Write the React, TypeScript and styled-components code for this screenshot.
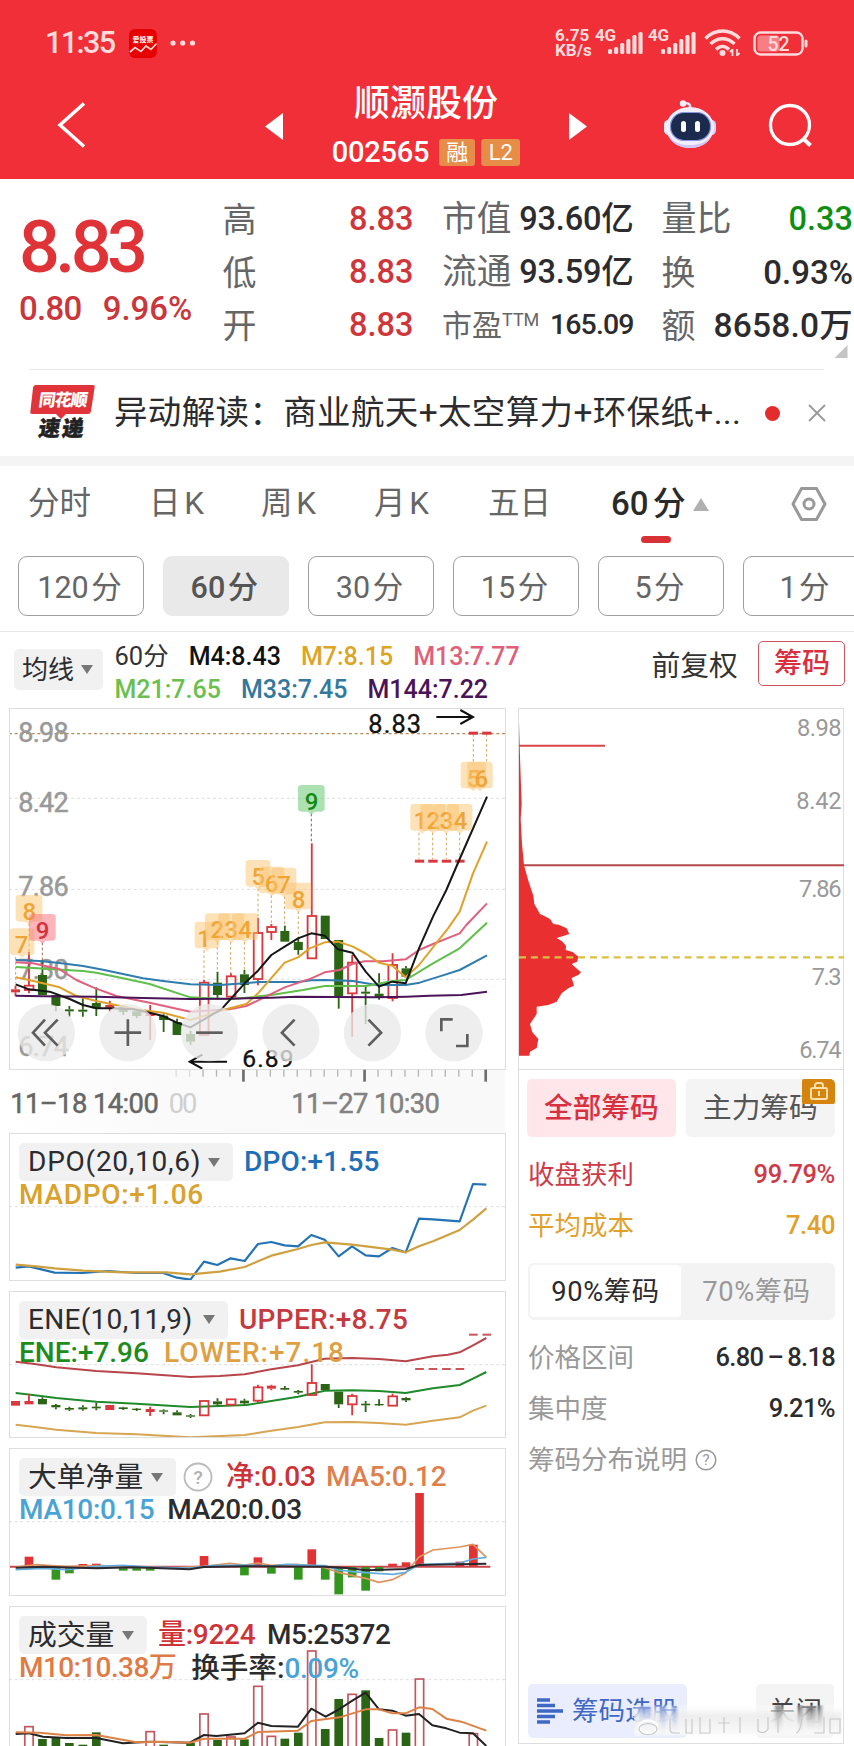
import React from "react";
import styled, { createGlobalStyle } from "styled-components";

const FONT = `Roboto, "Noto Sans CJK SC", sans-serif`;

const Global = createGlobalStyle`
  * { box-sizing: border-box; }
  html, body { margin: 0; padding: 0; background: #fff; }
  body { font-family: ${FONT}; color: #2c2c2e; width: 854px; height: 1746px; overflow: hidden; }
  svg { display: block; flex: none; }
`;

const Page = styled.div`
  width: 854px;
  height: 1746px;
  overflow: hidden;
  display: flex;
  flex-direction: column;
  background: #fff;
`;

const Txt = styled.span<{ $s: number; $c?: string; $w?: number; $ls?: number; $ml?: number; $width?: number }>`
  font-size: ${(p) => p.$s}px;
  line-height: 1;
  white-space: nowrap;
  color: ${(p) => p.$c ?? "#2c2c2e"};
  font-weight: ${(p) => p.$w ?? "inherit"};
  letter-spacing: ${(p) => p.$ls ?? 0}px;
  margin-left: ${(p) => p.$ml ?? 0}px;
  width: ${(p) => (p.$width ? p.$width + "px" : "auto")};
  flex: none;
`;

/* ---------- header ---------- */
const Header = styled.header`
  height: 179px;
  background: #f12f38;
  display: flex;
  flex-direction: column;
  flex: none;
`;
const StatusBar = styled.div`
  height: 86px;
  display: flex;
  align-items: center;
  padding-left: 45px;
`;
const Speed = styled.div`
  display: flex;
  flex-direction: column;
  font-size: 17px;
  line-height: 15px;
  font-weight: 700;
  color: #ffdcdc;
  width: 40px;
  margin-left: 359px;
  margin-top: -1px;
`;
const Signal = styled.div`
  display: flex;
  width: 53px;
  height: 30px;
  font-size: 17px;
  line-height: 15px;
  font-weight: 700;
  color: #ffdcdc;
  letter-spacing: -0.3px;
`;
const Nav = styled.div`
  height: 93px;
  display: flex;
  align-items: center;
  padding-left: 56px;
`;
const TitleBlock = styled.div`
  width: 252px;
  margin: 0 17px;
  height: 93px;
  display: flex;
  flex-direction: column;
  align-items: center;
`;
const CodeRow = styled.div`
  display: flex;
  align-items: center;
  height: 30px;
  margin-top: 15px;
`;
const Badge = styled.span<{ $w: number; $ml?: number }>`
  width: ${(p) => p.$w}px;
  height: 27px;
  border-radius: 3px;
  background: #e68d47;
  color: #fff;
  font-size: 22px;
  line-height: 27px;
  text-align: center;
  margin-left: ${(p) => p.$ml ?? 6}px;
`;

/* ---------- quote ---------- */
const Quote = styled.section`
  height: 190px;
  display: flex;
  flex: none;
`;
const PriceCol = styled.div`
  width: 223px;
  padding: 33px 0 0 19px;
`;
const ChangeRow = styled.div`
  display: flex;
  gap: 21px;
  margin-top: 8px;
`;
const QuoteCol = styled.div<{ $w: number; $ml: number }>`
  width: ${(p) => p.$w}px;
  margin-left: ${(p) => p.$ml}px;
  padding-top: 14px;
  flex: none;
`;
const QuoteRow = styled.div`
  height: 53px;
  display: flex;
  align-items: center;
  justify-content: space-between;
`;
const Corner = styled.div`
  width: 13px;
  height: 13px;
  margin: -7px 0 0 173px;
  background: #c4c4c4;
  clip-path: polygon(100% 0, 100% 100%, 0 100%);
`;

/* ---------- news ---------- */
const News = styled.section`
  height: 87px;
  margin: 0 30px;
  border-top: 1px solid #e6e6e6;
  display: flex;
  align-items: center;
  flex: none;
`;
const Dot = styled.i`
  width: 15px;
  height: 15px;
  flex: none;
  border-radius: 50%;
  background: #e52c2c;
  margin-left: 20px;
`;
const Band = styled.div`
  height: 10px;
  background: #f4f4f4;
  flex: none;
`;

/* ---------- tabs ---------- */
const Tabs = styled.nav`
  height: 90px;
  display: flex;
  padding: 13px 0 0 28px;
  flex: none;
`;
const Tab = styled.div<{ $w: number; $on?: boolean }>`
  width: ${(p) => p.$w}px;
  height: 70px;
  display: flex;
  flex-direction: column;
  color: ${(p) => (p.$on ? "#2a2a2a" : "#666")};
  font-weight: ${(p) => (p.$on ? 500 : 400)};
  font-size: ${(p) => (p.$on ? 33 : 31.5)}px;
  line-height: 50px;
  white-space: pre;
  word-spacing: -4px;
`;
const TabLabel = styled.div`
  display: flex;
  align-items: center;
  gap: 6px;
  height: 50px;
`;
const Underline = styled.i`
  width: 30px;
  height: 7px;
  flex: none;
  margin: 7px 0 0 30px;
  border-radius: 4px;
  background: #d93236;
`;
const Chips = styled.div`
  display: flex;
  gap: 19px;
  padding-left: 17.5px;
  height: 76px;
  overflow: hidden;
  border-bottom: 1px solid #e6e6e6;
  flex: none;
`;
const Chip = styled.button<{ $on?: boolean }>`
  width: 126px;
  height: 60px;
  flex: none;
  padding: 0 2px 2px 0;
  border-radius: 9px;
  border: ${(p) => (p.$on ? "none" : "1px solid #a0a0a0")};
  background: ${(p) => (p.$on ? "#e9e9e9" : "#fff")};
  font: ${(p) => (p.$on ? 500 : 400)} 30.5px ${FONT};
  color: ${(p) => (p.$on ? "#555" : "#666")};
  word-spacing: -5px;
`;

/* ---------- average lines bar ---------- */
const MaBar = styled.div`
  height: 76px;
  display: flex;
  padding-left: 13.5px;
  flex: none;
`;
const Pill = styled.div<{ $w: number; $h: number; $pl: number; $mt?: number }>`
  width: ${(p) => p.$w}px;
  height: ${(p) => p.$h}px;
  padding-left: ${(p) => p.$pl}px;
  margin-top: ${(p) => p.$mt ?? 0}px;
  border-radius: 5px;
  background: #f1f1f1;
  display: flex;
  align-items: center;
  flex: none;
`;
const Caret = styled.i<{ $up?: boolean; $ml?: number; $c?: string }>`
  width: 0;
  height: 0;
  margin-left: ${(p) => p.$ml ?? 0}px;
  border-left: ${(p) => (p.$up ? 8 : 6.5)}px solid transparent;
  border-right: ${(p) => (p.$up ? 8 : 6.5)}px solid transparent;
  border-${(p) => (p.$up ? "bottom" : "top")}: ${(p) => (p.$up ? 13 : 9)}px solid ${(p) => p.$c ?? "#777"};
`;
const MaList = styled.div`
  width: 525px;
  margin-left: 12px;
  padding-top: 8px;
`;
const MaRow = styled.div`
  display: flex;
  gap: 20px;
  height: 33px;
  align-items: center;
  font-weight: 500;
`;
const ChipToggle = styled.button`
  width: 87px;
  height: 45px;
  margin: 9px 0 0 20.5px;
  padding: 0;
  border: 1.5px solid #d05560;
  border-radius: 5px;
  background: #fff;
  color: #d92f40;
  font: 500 28px ${FONT};
  line-height: 40px;
`;

/* ---------- charts ---------- */
const Body = styled.main`
  display: flex;
  padding-left: 9px;
  gap: 12.5px;
  height: 1038px;
`;
const Left = styled.div`
  width: 496px;
  flex: none;
`;
const Frame = styled.div<{ $h: number; $mb?: number }>`
  width: 497px;
  height: ${(p) => p.$h}px;
  margin-bottom: ${(p) => p.$mb ?? 0}px;
  border: 1px solid #dedede;
  display: grid;
  overflow: hidden;
  > * { grid-area: 1 / 1; }
`;
const Canvas = styled.svg`
  width: 496px;
  margin: -1px 0 0 -1px;
  overflow: visible;
`;
const AxisStrip = styled.div`
  display: grid;
  height: 63.5px;
  background: linear-gradient(90deg, #fff 0, #fafafa 30%, #f9f9f9 100%);
`;
const Legend = styled.div`
  padding: 9px 0 0 9px;
  z-index: 0;
  font-weight: 500;
`;
const LegendRow = styled.div<{ $h: number; $gap?: number }>`
  height: ${(p) => p.$h}px;
  display: flex;
  align-items: center;
  gap: ${(p) => p.$gap ?? 11}px;
`;

/* ---------- chip distribution panel ---------- */
const Right = styled.aside`
  width: 326.5px;
  height: 1036px;
  border: 1px solid #dedede;
  display: flex;
  flex-direction: column;
`;
const DistBox = styled.div`
  height: 361px;
  border-bottom: 1px solid #dedede;
  flex: none;
`;
const PickRow = styled.div`
  display: flex;
  gap: 10px;
  padding: 9px 0 0 8.5px;
`;
const Pick = styled.div<{ $on?: boolean }>`
  position: relative;
  width: 149px;
  height: 58px;
  border-radius: 5px;
  background: ${(p) => (p.$on ? "#ffe6ea" : "#f4f4f4")};
  color: ${(p) => (p.$on ? "#d9303f" : "#555")};
  font-weight: ${(p) => (p.$on ? 500 : 400)};
  font-size: 28.7px;
  line-height: 58px;
  padding-left: 17px;
`;
const LockTag = styled.span`
  position: absolute;
  right: 0;
  top: 0;
  width: 33px;
  height: 25px;
  border-radius: 2px 5px 2px 2px;
  background: #d5850f;
  display: flex;
  justify-content: center;
`;
const Stat = styled.div<{ $start?: boolean }>`
  height: 51px;
  padding: 0 8px 0 9.5px;
  display: flex;
  align-items: center;
  justify-content: ${(p) => (p.$start ? "flex-start" : "space-between")};
  gap: 8px;
  word-spacing: -1.5px;
`;
const Stats = styled.div<{ $mt: number }>`
  margin-top: ${(p) => p.$mt}px;
`;
const Segments = styled.div`
  display: flex;
  width: 307px;
  height: 57px;
  margin: 11px 0 0 9px;
  padding: 2.5px;
  border-radius: 6px;
  background: #f3f3f3;
`;
const Segment = styled.div<{ $on?: boolean }>`
  width: 151px;
  border-radius: 4px;
  background: ${(p) => (p.$on ? "#fff" : "transparent")};
  color: ${(p) => (p.$on ? "#2a2a2a" : "#999")};
  text-align: center;
  font-size: 27.3px;
  letter-spacing: 0.6px;
  line-height: 54px;
`;
const BottomRow = styled.div`
  position: relative;
  display: flex;
  justify-content: space-between;
  margin: auto 9px 5px 9.5px;
`;
const BottomBtn = styled.div<{ $w: number; $blue?: boolean }>`
  width: ${(p) => p.$w}px;
  height: 54px;
  border-radius: 5px;
  background: ${(p) => (p.$blue ? "#e9edfd" : "#f4f4f4")};
  color: ${(p) => (p.$blue ? "#3f68c4" : "#444")};
  font-size: 26.5px;
  line-height: 1;
  display: flex;
  align-items: center;
  padding-left: ${(p) => (p.$blue ? 9 : 13)}px;
  gap: 9px;
`;
const Smear = styled.div`
  position: absolute;
  left: 106px;
  top: 21px;
  width: 208px;
  height: 33px;
`;

const R = "#d9383c";
const G = "#2c6416";
const X = (i: number) => 47.5 + i * 40.4;

/* kind, index, high, body top, body bottom, low */
type Candle = ["r" | "g" | "rf", number, number, number, number, number];
const candles: Candle[] = [
  ["rf", 0, 257, 268, 277, 289],
  ["r", 1, 155, 257, 270, 280],
  ["g", 2, 180, 225, 285, 285],
  ["g", 3, 285, 285, 318, 334],
  ["g", 4, 318, 328, 334, 350],
  ["g", 5, 295, 329, 335, 350],
  ["g", 6, 262, 309, 325, 348],
  ["rf", 7, 302, 315, 323, 335],
  ["g", 8, 315, 320, 336, 345],
  ["g", 9, 328, 334, 348, 355],
  ["rf", 10, 315, 338, 348, 420],
  ["g", 11, 343, 347, 360, 396],
  ["g", 12, 356, 366, 405, 405],
  ["g", 13, 392, 402, 425, 434],
  ["r", 14, 240, 248, 405, 405],
  ["g", 15, 215, 248, 285, 296],
  ["r", 16, 220, 229, 290, 292],
  ["g", 17, 210, 223, 255, 279],
  ["r", 18, 53, 99, 237, 256],
  ["r", 19, 72, 81, 96, 120],
  ["g", 20, 77, 93, 125, 125],
  ["g", 21, 113, 126, 150, 164],
  ["r", 22, -170, 48, 175, 175],
  ["g", 23, 47, 47, 117, 117],
  ["g", 24, 120, 120, 288, 326],
  ["r", 25, 165, 188, 280, 410],
  ["g", 26, 255, 275, 281, 372],
  ["g", 27, 220, 281, 292, 299],
  ["r", 28, 160, 195, 294, 304],
  ["g", 29, 198, 205, 230, 230],
];

const Candles = ({ data }: { data: Candle[] }) => (
  <>
    {data.map(([k, i, h, t, b, l]) => {
      const x = X(i);
      const c = k === "g" ? G : R;
      return (
        <g key={i} stroke={c} fill={k === "r" ? "none" : c}>
          <path d={`M${x} ${h}V${t}M${x} ${b}V${l}`} strokeWidth={5.5} />
          {k === "r" ? (
            <rect x={x - 12.5} y={t} width={26} height={Math.max(b - t, 3)} strokeWidth={5.5} />
          ) : (
            <rect x={x - 13.5} y={t} width={27} height={b - t} stroke="none" />
          )}
        </g>
      );
    })}
  </>
);

const Line = ({ d, c, w = 6 }: { d: string; c: string; w?: number }) => (
  <polyline points={d} fill="none" stroke={c} strokeWidth={w} strokeLinejoin="round" />
);

/* label, left, top, width, digit x, colour set, candle x, dash end */
const tags: [string, number, number, number, number, string, number, number][] = [
  ["7", 30, 85, 74, 66, "o", 48, 250],
  ["8", 48, -15, 80, 89, "o", 88, 155],
  ["9", 88, 42, 80, 129, "r", 128, 222],
  ["1", 585, 65, 74, 613, "o", 613, 240],
  ["2", 616, 40, 74, 653, "o", 653, 215],
  ["3", 656, 40, 78, 695, "o", 693, 220],
  ["4", 697, 40, 78, 736, "o", 734, 210],
  ["5", 738, -120, 74, 776, "o", 775, 52],
  ["6", 778, -100, 76, 816, "o", 815, 72],
  ["7", 814, -97, 76, 853, "o", 855, 77],
  ["8", 857, -52, 78, 897, "o", 896, 113],
  ["9", 895, -345, 80, 936, "g", 935, -170],
  ["1", 1232, -288, 70, 1262, "o", 1258, -122],
  ["2", 1262, -288, 76, 1301, "o", 1299, -122],
  ["3", 1302, -288, 76, 1341, "o", 1340, -122],
  ["4", 1342, -288, 76, 1383, "o", 1380, -122],
  ["5", 1383, -415, 76, 1422, "o", 1421, -500],
  ["6", 1403, -415, 76, 1445, "o", 1461, -500],
];
const tagColors: Record<string, [string, string]> = {
  o: ["rgba(252,196,112,.5)", "#efa536"],
  r: ["rgba(250,120,130,.55)", "#d8303c"],
  g: ["rgba(120,205,125,.6)", "#0f8a14"],
};

const tools = [
  <path key="a" d="M-4 -39L-40 0L-4 39M34 -39L-4 0L34 39" />,
  <path key="b" d="M-40 0H40M0 -40V40" />,
  <path key="c" d="M-40 0H40" />,
  <path key="d" d="M11 -39L-27 0L11 39" />,
  <path key="e" d="M-12 -39L26 0L-12 39" />,
  <path key="f" d="M-38 -4V-40H-4M40 4V40H6" />,
];

const MainChart = () => (
  <Canvas viewBox="28 -576 1488 1083" height={361} fontFamily={FONT}>
    <g strokeWidth={3} fill="none" strokeDasharray="9 8">
      <path d="M28 -499H1516" stroke="#b98a5c" strokeWidth={3.5} />
      <path d="M28 -305H1516M28 -32H1516M28 238H1516" stroke="#dedede" />
    </g>
    <g fontSize={81} fill="#999" stroke="#999" strokeWidth={1.5}>
      <text x={56} y={-475} textLength={151}>8.98</text>
      <text x={56} y={-264} textLength={151}>8.42</text>
      <text x={56} y={-13} textLength={151}>7.86</text>
      <text x={56} y={237} textLength={151}>7.30</text>
      <text x={56} y={468} textLength={151}>6.74</text>
    </g>
    {tags.map(([, , top, , , c, cx, end], n) => (
      <path key={n} d={`M${cx} ${top < end ? top + 86 : top}V${end}`} stroke={c === "o" ? "#cfa860" : c === "g" ? "#4f7a4f" : "#a06a50"} strokeWidth={3} strokeDasharray="8 7" />
    ))}
    <Candles data={candles} />
    {[30, 31, 32, 33, 34, 35].map((i) => (
      <rect key={i} x={X(i) - 14} y={i < 34 ? -121 : -505} width={28} height={9} fill="#d9383c" />
    ))}
    <Line c="#2f7cae" d="48,180 120,183 180,189 250,198 310,209 370,222 430,235 490,243 572,253 660,255 735,250 775,246 895,246 935,241 975,240 1060,243 1130,255 1218,255 1260,248 1320,229 1380,210 1462,166" />
    <Line c="#5fbf4a" d="48,201 88,203 250,213 290,218 370,235 450,252 572,292 690,298 740,293 815,285 910,270 975,258 1100,258 1180,243 1218,240 1300,190 1380,145 1462,68" />
    <Line c="#e0607e" d="48,187 100,190 180,208 230,240 280,262 350,288 450,308 572,335 690,328 740,318 855,262 935,235 975,217 1020,210 1058,192 1095,184 1150,184 1218,178 1258,150 1300,132 1380,100 1400,75 1462,10" />
    <Line c="#e0a12a" d="48,232 88,240 130,250 180,262 230,288 290,303 410,328 490,338 572,360 690,325 740,312 775,280 855,188 895,172 930,145 975,127 1015,125 1060,140 1100,162 1138,188 1178,197 1218,232 1258,195 1345,85 1380,35 1420,-80 1462,-175" />
    <Line c="#4b1458" d="48,287 130,289 290,290 430,294 570,297 690,296 815,293 890,290 1130,292 1220,290 1290,287 1385,285 1462,275" />
    <Line c="#161616" d="48,253 88,268 150,275 210,297 250,315 290,325 335,325 400,328 450,338 490,348 532,368 572,382 665,328 735,250 775,212 815,165 855,140 895,115 935,100 975,107 1015,148 1058,158 1098,215 1138,260 1178,245 1218,250 1258,145 1300,50 1340,-30 1380,-123 1462,-310" />
    {tags.map(([t, l, top, w, dx, c], n) => (
      <g key={n}>
        <path
          d={`M${l + 10} ${top}H${l + w - 10}q10 0 10 10V${top + 70}q0 10 -10 10H${l + w / 2 + 10}l-10 9l-10 -9H${l + 10}q-10 0 -10 -10V${top + 10}q0 -10 10 -10Z`}
          fill={tagColors[c][0]}
        />
        <text x={dx} y={top + 75} textAnchor="middle" fontSize={72} fontWeight={500} fill={tagColors[c][1]}>{t}</text>
      </g>
    ))}
    <text x={1106} y={-502} fontSize={76} fill="#111" stroke="#111" strokeWidth={1} textLength={158}>8.83</text>
    <text x={728} y={502} fontSize={74} fill="#111" stroke="#111" strokeWidth={1} textLength={154}>6.89</text>
    <path d="M1310 -549H1418M1382 -570L1420 -549L1382 -528M682 485H572M608 464L570 485L608 506" fill="none" stroke="#111" strokeWidth={6} />
    {tools.map((p, i) => (
      <g key={i} transform={`translate(${140 + i * 244.6} 398)`} fill="none" stroke="#5e5e5e" strokeWidth={8}>
        <circle r={86} fill="rgba(233,233,233,.78)" stroke="none" />
        {p}
      </g>
    ))}
  </Canvas>
);

const Axis = () => (
  <AxisStrip>
    <Canvas viewBox="28 508 1488 190" height={63.3} fontFamily={FONT}>
      {Array.from({ length: 24 }, (_, n) => n + 12).map((i) => {
        const major = i === 17 || i === 26 || i === 35;
        return <path key={i} d={`M${X(i)} 510V${major ? 546 : 531}`} stroke={major ? "#6e6e6e" : i < 14 ? "#ddd" : "#b5b5b5"} strokeWidth={major ? 8 : 4} />;
      })}
      <g fontSize={82} strokeWidth={1.5}>
        <text x={34} y={640} textLength={446} fill="#666" stroke="#666">11–18 14:00</text>
        <text x={510} y={640} textLength={86} fill="#cfcfcf">00</text>
        <text x={878} y={640} textLength={446} fill="#828282" stroke="#828282">11–27 10:30</text>
      </g>
    </Canvas>
  </AxisStrip>
);

const eneCandles: Candle[] = [
  ["rf", 0, 843, 843, 857, 857],
  ["rf", 1, 822, 843, 853, 853],
  ["g", 2, 832, 837, 853, 853],
  ["g", 3, 852, 855, 862, 868],
  ["g", 4, 860, 864, 869, 873],
  ["g", 5, 856, 862, 868, 872],
  ["g", 6, 848, 860, 865, 871],
  ["rf", 7, 855, 855, 870, 870],
  ["g", 8, 860, 862, 867, 870],
  ["g", 9, 864, 866, 870, 873],
  ["rf", 10, 860, 867, 876, 888],
  ["g", 11, 868, 871, 875, 883],
  ["g", 12, 871, 877, 886, 886],
  ["g", 13, 882, 886, 890, 894],
  ["r", 14, 843, 843, 886, 886],
  ["g", 15, 835, 844, 853, 858],
  ["r", 16, 838, 838, 854, 854],
  ["g", 17, 836, 842, 850, 855],
  ["r", 18, 794, 802, 842, 847],
  ["rf", 19, 794, 797, 806, 811],
  ["g", 20, 798, 804, 809, 811],
  ["g", 21, 810, 813, 818, 823],
  ["r", 22, 733, 789, 825, 825],
  ["g", 23, 792, 792, 810, 810],
  ["g", 24, 815, 815, 853, 864],
  ["r", 25, 821, 828, 853, 886],
  ["g", 26, 843, 851, 856, 876],
  ["g", 27, 838, 852, 856, 858],
  ["r", 28, 821, 829, 857, 857],
  ["g", 29, 832, 834, 841, 846],
];

const SubFrame = ({ top, mid, children, legend }: { top: number; mid: number; children: React.ReactNode; legend: React.ReactNode }) => (
  <Frame $h={147.5} $mb={10.2}>
    <Canvas viewBox={`28 ${top} 1488 441`} height={147}>
      <path d={`M28 ${mid}H1516`} stroke="#dedede" strokeWidth={3} strokeDasharray="9 8" />
      {children}
    </Canvas>
    <Legend>{legend}</Legend>
  </Frame>
);

const netBars: [number, number, number][] = [
  [1, 381, 410], [3, 412, 450], [4, 412, 431], [5, 403, 410], [6, 402, 410], [8, 412, 423], [9, 412, 423], [10, 412, 423],
  [14, 379, 410], [17, 412, 437], [18, 383, 410], [19, 412, 432], [21, 412, 450], [22, 359, 410], [23, 412, 450], [24, 412, 494],
  [25, 412, 443], [26, 412, 483], [27, 412, 425], [28, 402, 410], [29, 398, 410], [30, 190, 410], [33, 396, 410], [34, 345, 410],
];
const volRed: [number, number][] = [[1, 890], [10, 905], [14, 852], [16, 921], [18, 769], [19, 919], [22, 663], [25, 793], [28, 900], [30, 747], [34, 911]];
const volGreen: [number, number][] = [
  [2, 927], [3, 922], [4, 939], [5, 944], [6, 907], [11, 944], [13, 938], [15, 930], [17, 928], [20, 926], [21, 908], [23, 897], [24, 807], [26, 781], [27, 924], [29, 908],
];

const Wifi = () => (
  <svg width="37" height="28" viewBox="0 0 37 28" fill="none" stroke="#ffdcdc" strokeWidth="3.4" style={{ marginLeft: 3 }}>
    <path d="M1.500 9.500C11 -.5 26 -.5 35.500 9.500M6.500 15C13.500 8 23.500 8 30.500 15M12 20.500C16 16.500 21 16.500 25 20.500" />
    <circle cx="18.500" cy="24" r="3" fill="#ffdcdc" stroke="none" />
    <path d="M28.500 20V27M28.500 20.500L26 23M33 27V20M33 26.500L35.500 24" strokeWidth="1.800" />
  </svg>
);

const Bars = () => (
  <svg width="36" height="23" viewBox="0 0 36 23" fill="#ffdcdc" style={{ marginTop: 3, marginLeft: -8 }}>
    {[5, 7, 11, 15, 19, 22].map((h, i) => <rect key={i} x={i * 6.1} y={23 - h} width={4.1} height={h} rx={1.5} />)}
  </svg>
);

const Robot = () => (
  <svg width="52" height="49" viewBox="0 0 52 49">
    <path d="M26 8C27 3 23 3 19 3" stroke="#e6e2fb" strokeWidth="2.500" fill="none" />
    <circle cx="19" cy="3.500" r="3.200" fill="#f4eefb" />
    <rect x="0" y="20" width="9" height="15" rx="4.500" fill="#f0eaff" />
    <rect x="43" y="20" width="9" height="15" rx="4.500" fill="#d6d0fa" />
    <ellipse cx="26" cy="27.500" rx="24" ry="20.500" fill="#f3eefd" />
    <path d="M49 32C46 43 37 48 26 48S6 43 3 32C8 44 18 45 26 45S45 43 49 32Z" fill="#cfc6f6" />
    <rect x="6.500" y="12.500" width="40" height="28" rx="13.500" fill="#1c2a4e" stroke="#8797e2" strokeWidth="1.200" />
    <rect x="17" y="21" width="5" height="11" rx="2.500" fill="#fff" />
    <rect x="31" y="21" width="5" height="11" rx="2.500" fill="#fff" />
  </svg>
);

const Lbl = ({ t, s = 34 }: { t: string; s?: number }) => <Txt $s={s} $c="#666">{t}</Txt>;

const chipsList = ["120 分", "60 分", "30 分", "15 分", "5 分", "1 分"];

export default function App() {
  return (
    <Page>
      <Global />
      <Header>
        <StatusBar>
          <Txt $s={30.5} $c="#ffdcdc" $ls={-1.6} $width={84} $w={500}>11:35</Txt>
          <svg width="28" height="29" viewBox="0 0 28 29">
            <rect width="28" height="29" rx="6" fill="#e60000" />
            <text x="14" y="12.500" fontSize="7" fontWeight="900" textAnchor="middle" fill="#ffe2dc" fontFamily={FONT}>爱投票</text>
            <path d="M1 23L6 18.500L12 22.500L17 17L22 20.500L27.500 14.500" fill="none" stroke="#ffd9d0" strokeWidth="1.700" />
          </svg>
          <svg width="26" height="6" viewBox="0 0 26 6" style={{ marginLeft: 13 }} fill="#ffdcdc">
            <circle cx="3" cy="3" r="2.600" /><circle cx="12.700" cy="3" r="2.600" /><circle cx="22.500" cy="3" r="2.600" />
          </svg>
          <Speed><span>6.75</span><span>KB/s</span></Speed>
          <Signal>4G<Bars /></Signal>
          <Signal>4G<Bars /></Signal>
          <Wifi />
          <svg width="55" height="25" viewBox="0 0 55 25" style={{ marginLeft: 12 }}>
            <rect x="1.500" y="1.500" width="48" height="22" rx="6" fill="none" stroke="#ffdcdc" strokeWidth="2.400" />
            <rect x="4.500" y="4.500" width="22" height="16" rx="3" fill="#f77f83" />
            <rect x="51.500" y="8.500" width="3" height="8" rx="1.500" fill="#ffdcdc" />
            <text x="25.500" y="19.800" fontSize="19.500" fontWeight="500" textAnchor="middle" fill="#ffdcdc" fontFamily={FONT}>52</text>
          </svg>
        </StatusBar>
        <Nav>
          <svg width="32" height="46" viewBox="0 0 32 46" style={{ marginTop: -16 }}><path d="M28 1.500L4 23L28 44.500" fill="none" stroke="#fff" strokeWidth="3.500" /></svg>
          <svg width="18" height="27" viewBox="0 0 18 27" style={{ marginTop: -12, marginLeft: 177 }}><path d="M18 0V27L0 13.500Z" fill="#fff" /></svg>
          <TitleBlock>
            <Txt $s={36} $c="#fff" $w={500}>顺灏股份</Txt>
            <CodeRow>
              <Txt $s={29} $c="#fff" $w={500} $ls={-0.2}>002565</Txt>
              <Badge $w={36} $ml={10}>融</Badge>
              <Badge $w={39}>L2</Badge>
            </CodeRow>
          </TitleBlock>
          <svg width="18" height="27" viewBox="0 0 18 27" style={{ marginTop: -12 }}><path d="M0 0V27L18 13.500Z" fill="#fff" /></svg>
          <svg width="77" height="1" />
          <div style={{ marginTop: -17 }}><Robot /></div>
          <svg width="46" height="46" viewBox="0 0 46 46" style={{ margin: "-14px 0 0 52px" }} fill="none" stroke="#fff" strokeWidth="3.300">
            <circle cx="22" cy="22" r="19.500" /><path d="M34.500 35L42.500 42.500" strokeWidth="4" />
          </svg>
        </Nav>
      </Header>

      <Quote>
        <PriceCol>
          <Txt $s={72} $c="#e03338" $w={500} $ls={-4.6}>8.83</Txt>
          <ChangeRow>
            <Txt $s={33} $c="#c9373c" $w={500} $ls={-0.7}>0.80</Txt>
            <Txt $s={33} $c="#c9373c" $w={500}>9.96%</Txt>
          </ChangeRow>
        </PriceCol>
        <QuoteCol $w={191} $ml={-0.5}>
          {["高", "低", "开"].map((t) => (
            <QuoteRow key={t}><Lbl t={t} /><Txt $s={32.5} $c="#d0353a" $w={500}>8.83</Txt></QuoteRow>
          ))}
        </QuoteCol>
        <QuoteCol $w={191.5} $ml={28.5}>
          <QuoteRow><Lbl t="市值" s={34.7} /><Txt $s={32.5} $w={500} $ls={-0.2}>93.60亿</Txt></QuoteRow>
          <QuoteRow><Lbl t="流通" s={34.7} /><Txt $s={32.5} $w={500} $ls={-0.2}>93.59亿</Txt></QuoteRow>
          <QuoteRow>
            <Lbl t="市盈" s={30} />
            <Txt $s={18} $c="#666" $width={48} style={{ marginTop: -11 }}>TTM</Txt>
            <Txt $s={28.500} $w={500} $ls={-0.9}>165.09</Txt>
          </QuoteRow>
        </QuoteCol>
        <QuoteCol $w={191.5} $ml={28}>
          <QuoteRow><Lbl t="量比" s={35} /><Txt $s={32.5} $c="#0e8f12" $w={500}>0.33</Txt></QuoteRow>
          <QuoteRow><Lbl t="换" /><Txt $s={33} $w={500}>0.93%</Txt></QuoteRow>
          <QuoteRow><Lbl t="额" /><Txt $s={33.500} $w={500} $ls={0.2}>8658.0万</Txt></QuoteRow>
          <Corner />
        </QuoteCol>
      </Quote>

      <News>
        <svg width="66" height="56" viewBox="0 0 66 56" fontFamily={FONT}>
          <path d="M6 0H63q2 0 1.700 2L61 26q-.5 3 -3 3H36L31 34L26 29H2q-2 0 -1.700 -2L3 3q.5 -3 3 -3Z" fill="#e0343a" />
          <g fontWeight="900" transform="skewX(-8)">
            <text x="11" y="21.500" fontSize="17" fill="#fff" textLength="49">同花顺</text>
            <text x="15" y="51.500" fontSize="21.500" fill="#222" stroke="#222" strokeWidth=".5" textLength="45">速递</text>
          </g>
        </svg>
        <Txt $s={33.500} $ml={18} $ls={0.35} $width={631}>异动解读：商业航天+太空算力+环保纸+...</Txt>
        <Dot />
        <svg width="18" height="18" viewBox="0 0 18 18" style={{ marginLeft: 28 }}><path d="M1 1L17 17M17 1L1 17" stroke="#999" strokeWidth="1.800" /></svg>
      </News>
      <Band />

      <Tabs>
        <Tab $w={121}>分时</Tab>
        <Tab $w={112}>日 K</Tab>
        <Tab $w={113}>周 K</Tab>
        <Tab $w={114}>月 K</Tab>
        <Tab $w={123}>五日</Tab>
        <Tab $w={180} $on>
          <TabLabel>60 分<Caret $up $c="#b0b0b0" $ml={1} /></TabLabel>
          <Underline />
        </Tab>
        <svg width="36" height="34" viewBox="0 0 36 34" fill="none" stroke="#999" strokeWidth="3" style={{ marginTop: 8 }}>
          <path d="M10.500 1.500H25.500L34 17L25.500 32.500H10.500L2 17Z" strokeLinejoin="round" /><circle cx="18" cy="17" r="5" />
        </svg>
      </Tabs>
      <Chips>
        {chipsList.map((c, i) => <Chip key={c} $on={i === 1}>{c}</Chip>)}
      </Chips>

      <MaBar>
        <Pill $w={89} $h={41} $pl={8.5} $mt={17}>
          <Txt $s={26}>均线</Txt><Caret $ml={7} />
        </Pill>
        <MaList>
          <MaRow>
            <Txt $s={25.5} $c="#333" $w={400}>60分</Txt>
            <Txt $s={25} $c="#111">M4:8.43</Txt>
            <Txt $s={25} $c="#dda526">M7:8.15</Txt>
            <Txt $s={25} $c="#e0607a">M13:7.77</Txt>
          </MaRow>
          <MaRow>
            <Txt $s={25} $c="#6abf4e">M21:7.65</Txt>
            <Txt $s={25} $c="#33789e">M33:7.45</Txt>
            <Txt $s={25} $c="#4b1458">M144:7.22</Txt>
          </MaRow>
        </MaList>
        <Txt $s={28.8} $c="#333" $ml={12} style={{ marginTop: 20 }}>前复权</Txt>
        <ChipToggle>筹码</ChipToggle>
      </MaBar>

      <Body>
        <Left>
          <Frame $h={361.500}><MainChart /></Frame>
          <Axis />
          <SubFrame
            top={40}
            mid={261}
            legend={
              <>
                <LegendRow $h={38}>
                  <Pill $w={214} $h={38} $pl={9}><Txt $s={28} $w={400} $ls={0.75} $width={174}>DPO(20,10,6)</Txt><Caret $ml={6} /></Pill>
                  <Txt $s={28} $c="#1f6fb8" $ls={0.2}>DPO:+1.55</Txt>
                </LegendRow>
                <LegendRow $h={28}><Txt $s={28} $c="#d9a22e" $ls={0.7}>MADPO:+1.06</Txt></LegendRow>
              </>
            }
          >
            <Line c="#2372b5" w={6.500} d="48,444 88,440 125,449 165,459 250,460 325,454 410,460 490,460 532,474 572,480 613,426 653,436 693,416 735,424 775,373 815,367 855,377 895,380 935,346 975,360 1017,410 1057,380 1098,407 1138,410 1178,385 1218,398 1258,297 1300,299 1380,305 1420,193 1460,195" />
            <Line c="#cfa040" w={6.500} d="48,435 110,440 165,446 250,453 370,458 500,458 572,464 660,456 735,442 775,425 815,408 895,388 935,376 975,368 1057,375 1100,380 1178,390 1218,398 1258,380 1300,365 1380,331 1420,300 1460,266" />
          </SubFrame>
          <SubFrame
            top={513}
            mid={734}
            legend={
              <>
                <LegendRow $h={38}>
                  <Pill $w={209} $h={38} $pl={9}><Txt $s={28} $w={400} $ls={0.3} $width={168}>ENE(10,11,9)</Txt><Caret $ml={7} /></Pill>
                  <Txt $s={28} $c="#c43a40" $ls={0.3}>UPPER:+8.75</Txt>
                </LegendRow>
                <LegendRow $h={28} $gap={15}>
                  <Txt $s={28} $c="#1d8c1d">ENE:+7.96</Txt>
                  <Txt $s={28} $c="#dfa044" $ls={1}>LOWER:+7.18</Txt>
                </LegendRow>
              </>
            }
          >
            <Line c="#b8454a" d="48,725 100,731 170,742 290,753 410,760 572,771 660,768 735,763 815,748 895,736 975,716 1057,714 1138,717 1218,724 1300,709 1345,704 1380,697 1420,676 1460,654" />
            <Line c="#1f8a2c" d="48,819 100,825 170,834 290,845 410,851 572,861 660,858 740,855 815,843 895,830 975,812 1057,811 1138,813 1218,819 1300,805 1380,795 1420,776 1460,756" />
            <Line c="#d6a653" d="48,914 100,920 170,929 290,939 410,943 572,952 735,945 815,932 895,921 975,907 1057,906 1138,909 1218,914 1300,902 1380,892 1420,872 1460,857" />
            <Candles data={eneCandles} />
            {[30, 31, 32, 33, 34, 35].map((i) => <rect key={i} x={X(i) - 13} y={i < 34 ? 744 : 641} width={26} height={6} fill="#c9545a" />)}
          </SubFrame>
          <SubFrame
            top={55}
            mid={276}
            legend={
              <>
                <LegendRow $h={38} $gap={7}>
                  <Pill $w={157} $h={38} $pl={9}><Txt $s={28.8} $w={400} $width={116}>大单净量</Txt><Caret $ml={7} /></Pill>
                  <svg width="30" height="30" viewBox="0 0 30 30" style={{ marginRight: 6 }}>
                    <circle cx="15" cy="15" r="13.500" fill="none" stroke="#bbb" strokeWidth="1.800" />
                    <text x="15" y="22" textAnchor="middle" fontSize="19" fill="#b0b0b0" fontFamily={FONT}>?</text>
                  </svg>
                  <Txt $s={28} $c="#cc3338" $ls={-0.2} $width={93}>净:0.03</Txt>
                  <Txt $s={28} $c="#e07f4c" $ls={-0.2}>MA5:0.12</Txt>
                </LegendRow>
                <LegendRow $h={28} $gap={13}>
                  <Txt $s={28} $c="#4aa3d6" $ls={-0.3}>MA10:0.15</Txt>
                  <Txt $s={28} $ls={-0.4}>MA20:0.03</Txt>
                </LegendRow>
              </>
            }
          >
            <path d="M28 411H1472" stroke="#c9474c" strokeWidth={6} />
            {netBars.map(([i, t, b]) => <rect key={i} x={X(i) - 13} y={t} width={26} height={b - t} fill={b > 411 ? "#34961f" : "#e23234"} />)}
            <Line c="#e0935f" w={5} d="48,412 110,405 200,411 290,408 370,413 530,414 613,410 690,401 735,406 775,400 815,407 890,404 935,408 975,414 1015,428 1057,437 1098,446 1138,458 1178,450 1218,430 1258,382 1300,361 1380,352 1420,344 1460,383" />
            <Line c="#63aede" w={5} d="48,420 130,416 200,420 290,410 370,407 450,412 570,415 640,408 740,406 815,409 860,404 935,407 975,408 1015,421 1057,426 1130,431 1180,434 1218,428 1258,405 1380,400 1420,388 1460,383" />
            <Line c="#2a2a30" d="48,414 130,411 290,416 400,413 570,419 613,412 740,410 975,411 1040,415 1100,422 1218,418 1258,406 1380,404 1460,402" />
          </SubFrame>
          <SubFrame
            top={528}
            mid={749}
            legend={
              <>
                <LegendRow $h={38}>
                  <Pill $w={128} $h={38} $pl={9}><Txt $s={28.8} $w={400} $width={87}>成交量</Txt><Caret $ml={7} /></Pill>
                  <Txt $s={28} $c="#cf3338" $ls={-0.3} $width={98}>量:9224</Txt>
                  <Txt $s={28} $ls={-0.5}>M5:25372</Txt>
                </LegendRow>
                <LegendRow $h={28} $gap={15}>
                  <Txt $s={28} $c="#e07b45" $ls={-0.6}>M10:10.38万</Txt>
                  <Txt $s={28.6}>换手率:<Txt $s={28} $c="#4aa3d6" $ls={-0.4}>0.09%</Txt></Txt>
                </LegendRow>
              </>
            }
          >
            {volRed.map(([i, t]) => <rect key={i} x={X(i) - 12.500} y={t} width={25} height={968 - t} fill="none" stroke="#c4565f" strokeWidth={5} />)}
            {volGreen.map(([i, t]) => <rect key={i} x={X(i) - 13} y={t} width={26} height={968 - t} fill={G} />)}
            <Line c="#222" d="48,912 88,910 130,920 200,924 290,924 370,940 450,935 570,938 613,915 650,918 690,914 735,910 775,878 815,888 895,890 935,836 978,860 1015,840 1058,812 1098,788 1138,838 1178,842 1218,857 1258,852 1298,886 1340,895 1380,908 1420,910 1460,948" />
            <Line c="#de8146" d="48,907 120,908 200,916 290,915 410,937 490,935 570,938 613,926 735,926 775,906 895,902 935,873 1020,862 1098,838 1138,838 1178,850 1218,850 1258,832 1298,837 1340,866 1385,875 1460,902" />
          </SubFrame>
        </Left>

        <Right>
          <DistBox>
            <svg width="325" height="360" viewBox="57 55 975 1080" fontFamily={FONT}>
              <path d="M57 95L60 200L65 340L62 385L66 460L72 524L85 570L100 615L103 640L120 670L133 676L150 685L160 700L176 702L200 713L208 730L190 736L170 742L186 752L198 765L197 778L218 784L235 798L231 813L215 820L228 832L243 845L236 852L215 862L222 885L205 893L185 908L170 933L145 943L110 948L110 970L90 1000L97 1025L115 1045L110 1072L90 1083L88 1095H57Z" fill="#e92f30" />
              <path d="M57 165H315" stroke="#dc4448" strokeWidth={6} />
              <path d="M70 524H1032" stroke="#b54a4c" strokeWidth={6} />
              <path d="M57 800H1032" stroke="#dcc040" strokeWidth={7} strokeDasharray="21 14.500" />
              <g fontSize={71} fill="#999" textAnchor="end">
                <text x={1025} y={136} textLength={134}>8.98</text>
                <text x={1025} y={355} textLength={136}>8.42</text>
                <text x={1025} y={619} textLength={128}>7.86</text>
                <text x={1025} y={883} textLength={90}>7.3</text>
                <text x={1025} y={1103} textLength={127}>6.74</text>
              </g>
            </svg>
          </DistBox>
          <PickRow>
            <Pick $on>全部筹码</Pick>
            <Pick>
              主力筹码
              <LockTag>
                <svg width="20" height="22" viewBox="0 0 20 22" fill="none" stroke="#ffe0a8" strokeWidth="2"><rect x="2" y="9" width="16" height="11" rx="1.500" /><path d="M6 9V6.500Q6 4 8.500 4H11.500Q14 4 14 6.500V9M10 12V17" /></svg>
              </LockTag>
            </Pick>
          </PickRow>
          <Stats $mt={12.500}>
            <Stat><Txt $s={26.5} $c="#cf3a48">收盘获利</Txt><Txt $s={25.5} $c="#cf3a48" $w={500} $ls={-0.4}>99.79%</Txt></Stat>
            <Stat><Txt $s={26.5} $c="#e0a02a">平均成本</Txt><Txt $s={25.5} $c="#e0a02a" $w={500} $ls={-0.4}>7.40</Txt></Stat>
          </Stats>
          <Segments><Segment $on>90%筹码</Segment><Segment>70%筹码</Segment></Segments>
          <Stats $mt={13}>
            <Stat><Txt $s={26.5} $c="#999">价格区间</Txt><Txt $s={25.5} $w={500} $ls={-0.7}>6.80 – 8.18</Txt></Stat>
            <Stat><Txt $s={26.5} $c="#999">集中度</Txt><Txt $s={25.5} $w={500} $ls={-0.6}>9.21%</Txt></Stat>
            <Stat $start>
              <Txt $s={26.5} $c="#999">筹码分布说明</Txt>
              <svg width="22" height="22" viewBox="0 0 22 22">
                <circle cx="11" cy="11" r="9.800" fill="none" stroke="#999" strokeWidth="1.500" />
                <text x="11" y="16.300" textAnchor="middle" fontSize="15" fill="#999" fontFamily={FONT}>?</text>
              </svg>
            </Stat>
          </Stats>
          <BottomRow>
            <BottomBtn $w={159} $blue>
              <svg width="26" height="26" viewBox="0 0 26 26" stroke="#3f68c4" strokeWidth="3.400"><path d="M0 2H13M0 7.500H18M0 13H26M0 18.500H18M0 24H13" /></svg>
              筹码选股
            </BottomBtn>
            <BottomBtn $w={78}>关闭</BottomBtn>
            <Smear>
              <svg width="208" height="33" viewBox="0 0 208 33">
                <defs>
                  <linearGradient id="haze" x1="0" y1="0" x2="0" y2="1">
                    <stop offset="0" stopColor="#fff" stopOpacity=".3" />
                    <stop offset=".35" stopColor="#ececec" stopOpacity=".92" />
                    <stop offset="1" stopColor="#fafafa" stopOpacity=".95" />
                  </linearGradient>
                  <linearGradient id="blue" x1="0" y1="0" x2="0" y2="1"><stop offset="0" stopColor="#5f80cc" stopOpacity=".75" /><stop offset="1" stopColor="#e9edfd" stopOpacity=".1" /></linearGradient>
                  <linearGradient id="dark" x1="0" y1="0" x2="0" y2="1"><stop offset="0" stopColor="#555" stopOpacity=".75" /><stop offset="1" stopColor="#eee" stopOpacity=".1" /></linearGradient>
                  <filter id="soft"><feGaussianBlur stdDeviation="1.500" /></filter>
                </defs>
                <rect width="208" height="30" fill="url(#haze)" filter="url(#soft)" />
                <g filter="url(#soft)">
                  <rect x="5" y="2" width="12" height="18" fill="url(#blue)" /><rect x="26" y="2" width="6" height="26" fill="url(#blue)" /><rect x="38" y="2" width="5" height="26" fill="url(#blue)" />
                  <rect x="141" y="0" width="7" height="28" fill="url(#dark)" /><rect x="164" y="0" width="5" height="28" fill="url(#dark)" /><rect x="172" y="2" width="10" height="24" fill="url(#dark)" /><rect x="184" y="0" width="4" height="28" fill="url(#dark)" />
                </g>
                <g fill="none" stroke="#c8c8c8" strokeWidth="1.200">
                  <ellipse cx="14" cy="22" rx="9" ry="6.500" stroke="#fff" strokeWidth="2.500" /><ellipse cx="14" cy="24" rx="9" ry="5.500" />
                  <path d="M36 14V24Q36 28 40 28H46M52 14V28H58V14M66 12V28H76V14M84 18H96M90 12V28M106 12V28M124 14V26Q130 30 134 24V12M144 28V14M162 28Q166 28 168 14M180 28H190V12M196 14H206V28H196Z" />
                </g>
              </svg>
            </Smear>
          </BottomRow>
        </Right>
      </Body>
    </Page>
  );
}
